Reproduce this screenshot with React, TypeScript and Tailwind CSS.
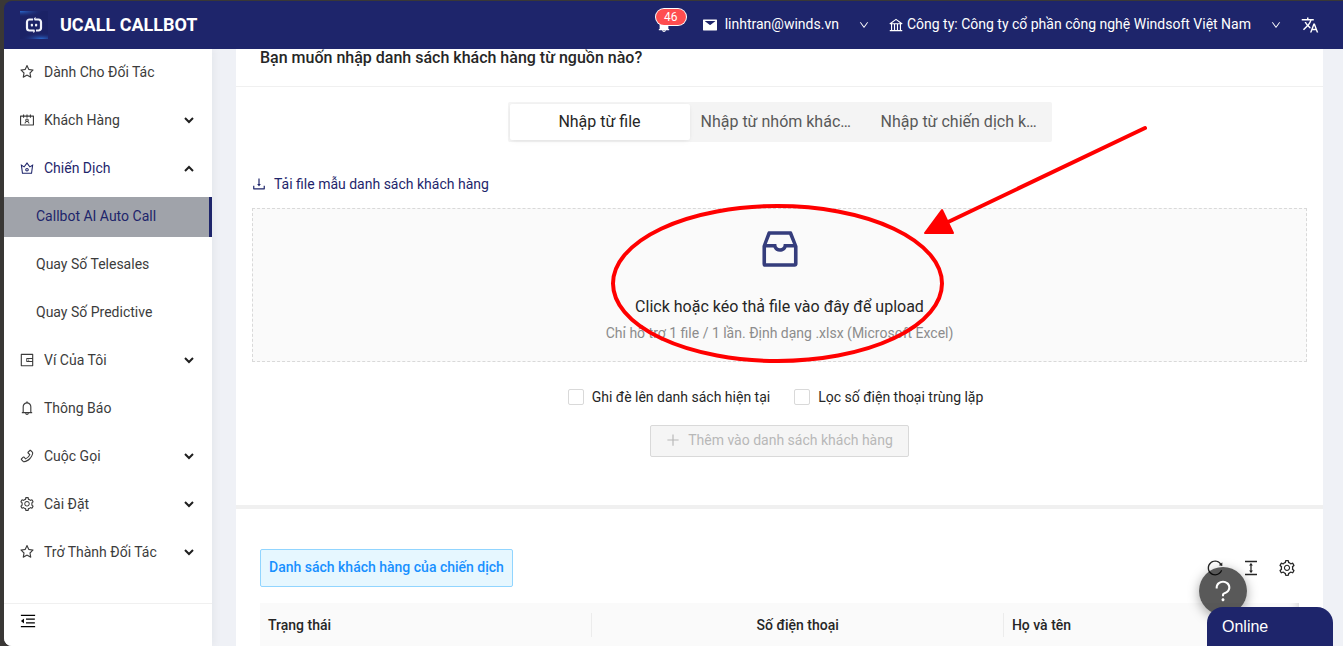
import React, { useState } from "react";
import type { IconType } from "react-icons";
import {
  AiFillBell,
  AiFillMail,
  AiOutlineBank,
  AiOutlineBell,
  AiOutlineColumnHeight,
  AiOutlineContacts,
  AiOutlineCrown,
  AiOutlineDown,
  AiOutlineDownload,
  AiOutlineInbox,
  AiOutlineMenuFold,
  AiOutlinePhone,
  AiOutlinePlus,
  AiOutlineQuestion,
  AiOutlineReload,
  AiOutlineSetting,
  AiOutlineStar,
  AiOutlineWallet,
} from "react-icons/ai";
import { MdTranslate } from "react-icons/md";

type MenuItem = {
  label: string;
  icon: IconType;
  arrow?: "up" | "down";
  active?: boolean;
  children?: { label: string; selected?: boolean }[];
};

const MENU: MenuItem[] = [
  { label: "Dành Cho Đối Tác", icon: AiOutlineStar },
  { label: "Khách Hàng", icon: AiOutlineContacts, arrow: "down" },
  {
    label: "Chiến Dịch",
    icon: AiOutlineCrown,
    arrow: "up",
    active: true,
    children: [
      { label: "Callbot AI Auto Call", selected: true },
      { label: "Quay Số Telesales" },
      { label: "Quay Số Predictive" },
    ],
  },
  { label: "Ví Của Tôi", icon: AiOutlineWallet, arrow: "down" },
  { label: "Thông Báo", icon: AiOutlineBell },
  { label: "Cuộc Gọi", icon: AiOutlinePhone, arrow: "down" },
  { label: "Cài Đặt", icon: AiOutlineSetting, arrow: "down" },
  { label: "Trở Thành Đối Tác", icon: AiOutlineStar, arrow: "down" },
];

const TABS = ["Nhập từ file", "Nhập từ nhóm khách hàng", "Nhập từ chiến dịch khác"];

// Ant glyphs carry a 64-unit margin; this trims it so they fill their box.
function Icon({ as: Glyph, className }: { as: IconType; className: string }) {
  return <Glyph viewBox="64 64 896 896" className={className} />;
}

function Logo() {
  return (
    <svg viewBox="0 0 28 28" className="size-7" aria-hidden="true">
      <defs>
        <radialGradient id="glow-top" cx="0" cy="0" r="1" gradientTransform="scale(0.9 0.22)">
          <stop offset="0" stopColor="#2a6ad0" />
          <stop offset="1" stopColor="#1b2266" stopOpacity="0" />
        </radialGradient>
        <radialGradient id="glow-base" cx="0" cy="0" r="1" gradientTransform="translate(0.75 1) scale(0.75 0.22)">
          <stop offset="0" stopColor="#2a6ad0" />
          <stop offset="1" stopColor="#1b2266" stopOpacity="0" />
        </radialGradient>
      </defs>
      <rect width="28" height="28" fill="#1b2266" />
      <rect width="28" height="28" fill="url(#glow-top)" />
      <rect width="28" height="28" fill="url(#glow-base)" />
      <g fill="none" stroke="#f1f2fa" strokeWidth="2.200">
        <path d="M13 8.500H9.500a2.500 2.500 0 0 0-2.500 2.500v6a2.500 2.500 0 0 0 2.500 2.500H12.500L14.500 19.500" />
        <path d="M14.500 8.500h4a2.500 2.500 0 0 1 2.500 2.500v6a2.500 2.500 0 0 1-2.500 2.500H16" />
        <path d="M14 8.500l1.500-2M14.500 19.500l-1 2" strokeWidth="1.200" />
      </g>
      <rect x="10.800" y="12.700" width="2.200" height="2.800" rx="0.800" fill="#f1f2fa" />
      <rect x="15" y="12.700" width="2.200" height="2.800" rx="0.800" fill="#f1f2fa" />
    </svg>
  );
}

function Chevron({ up }: { up?: boolean }) {
  return (
    <svg viewBox="0 0 10 10" className="size-[10px]" aria-hidden="true">
      <path
        d={up ? "M1 8 5 4 9 8" : "M1 3 5 7 9 3"}
        fill="none"
        stroke="#1f1f1f"
        strokeWidth="2"
      />
    </svg>
  );
}

function Header() {
  return (
    <header className="z-10 flex h-12 shrink-0 items-center justify-between rounded-tl-lg bg-[#1e256b] pr-6 pl-4 text-white">
      <a href="#home" className="flex items-center gap-3">
        <Logo />
        <h1 className="text-lg font-bold">UCALL CALLBOT</h1>
      </a>
      <div className="flex items-center text-sm">
        <button aria-label="Thông báo" className="relative mr-8">
          <Icon as={AiFillBell} className="size-[14px]" />
          <span className="absolute -top-[9px] -left-[1px] h-4 w-[30px] rounded-full bg-[#ff4d4f] text-center text-xs leading-4 ring-1 ring-white">
            46
          </span>
        </button>
        <button className="mr-5 flex items-center">
          <Icon as={AiFillMail} className="mr-2 size-[14px]" />
          <span className="pb-[2px]">linhtran@winds.vn</span>
          <Icon as={AiOutlineDown} className="ml-5 size-[10px]" />
        </button>
        <button className="mr-5 flex items-center">
          <Icon as={AiOutlineBank} className="mr-1 size-[14px]" />
          <span className="pb-[2px]">Công ty: Công ty cổ phần công nghệ Windsoft Việt Nam</span>
          <Icon as={AiOutlineDown} className="ml-5 size-[10px]" />
        </button>
        <button aria-label="Ngôn ngữ">
          <MdTranslate className="size-[18px]" />
        </button>
      </div>
    </header>
  );
}

function Sidebar() {
  return (
    <aside className="z-[5] flex w-52 shrink-0 flex-col rounded-bl-lg bg-white text-sm text-[#3c3c3c] shadow-[2px_0_8px_rgba(29,35,41,0.05)]">
      <nav className="grow pt-1">
        {MENU.map((item) => (
          <div key={item.label}>
            <button
              className={
                item.active
                  ? "mb-2 flex h-10 w-full items-center pr-[18px] pb-[2px] pl-4 text-[#1e256b]"
                  : "mb-2 flex h-10 w-full items-center pr-[18px] pb-[2px] pl-4"
              }
            >
              <Icon as={item.icon} className="mr-[10px] size-[14px]" />
              <span className="grow text-left">{item.label}</span>
              {item.arrow && <Chevron up={item.arrow === "up"} />}
            </button>
            {item.children?.map((child) => (
              <a
                key={child.label}
                href="#campaign"
                className={
                  child.selected
                    ? "mb-2 flex h-10 items-center border-r-3 border-[#1e256b] bg-[#a0a3aa] pb-[2px] pl-8 text-[#1e256b]"
                    : "mb-2 flex h-10 items-center pb-[2px] pl-8"
                }
              >
                {child.label}
              </a>
            ))}
          </div>
        ))}
      </nav>
      <div className="h-[43px] border-t border-[#f0f0f0] px-4 pt-[9px]">
        <button aria-label="Thu gọn">
          <Icon as={AiOutlineMenuFold} className="size-4 text-black" />
        </button>
      </div>
    </aside>
  );
}

function ImportPanel() {
  const [tab, setTab] = useState(0);
  return (
    <section className="bg-white pb-12 text-[#262626]">
      <h2 className="border-b border-[#f0f0f0] px-6 pb-[19px] text-base leading-[18px] font-medium">
        Bạn muốn nhập danh sách khách hàng từ nguồn nào?
      </h2>
      <div className="flex justify-center pt-[15px]">
        <div className="flex rounded-xs bg-[#f4f4f4] p-[2px]">
          {TABS.map((label, index) => (
            <button
              key={label}
              onClick={() => setTab(index)}
              className={
                index === tab
                  ? "h-9 w-[180px] truncate rounded-xs bg-white px-[11px] text-base text-[#262626] shadow-[0_2px_8px_-2px_rgba(0,0,0,0.05),0_1px_4px_-1px_rgba(0,0,0,0.07)]"
                  : "h-9 w-[180px] truncate px-[11px] text-base text-[#595959]"
              }
            >
              {label}
            </button>
          ))}
        </div>
      </div>
      <div className="px-4 pt-8">
        <a href="#template" className="flex h-5 items-center text-sm text-[#1e256b]">
          <Icon as={AiOutlineDownload} className="mr-2 size-[14px]" />
          Tải file mẫu danh sách khách hàng
        </a>
        <label className="mt-[14px] flex h-[154px] cursor-pointer flex-col items-center border border-dashed border-[#d9d9d9] bg-[#fafafa] pt-4">
          <input type="file" accept=".xlsx" className="sr-only" />
          <AiOutlineInbox className="size-12 text-[#353d7c]" />
          <span className="mt-[22px] text-base leading-6">Click hoặc kéo thả file vào đây để upload</span>
          <span className="mt-[3px] text-sm leading-[22px] text-[#8c8c8c]">
            Chỉ hỗ trợ 1 file / 1 lần. Định dạng .xlsx (Microsoft Excel)
          </span>
        </label>
      </div>
      <div className="mt-6 flex justify-center gap-4 text-sm leading-[22px]">
        {["Ghi đè lên danh sách hiện tại", "Lọc số điện thoại trùng lặp"].map((label) => (
          <label key={label} className="flex items-center gap-2 pr-2">
            <input
              type="checkbox"
              className="size-4 appearance-none rounded-xs border border-[#d9d9d9] bg-white checked:bg-[#1e256b]"
            />
            {label}
          </label>
        ))}
      </div>
      <div className="mt-[17px] flex justify-center">
        <button
          disabled
          className="flex h-8 items-center rounded-xs border border-[#d9d9d9] bg-[#f5f5f5] px-[15px] pb-[2px] text-sm text-[#b8b8b8]"
        >
          <Icon as={AiOutlinePlus} className="mr-2 size-[14px]" />
          Thêm vào danh sách khách hàng
        </button>
      </div>
    </section>
  );
}

function CustomerTable() {
  return (
    <section className="mt-1 grow bg-white px-6 pt-10 text-sm text-[#262626]">
      <div className="flex items-center justify-between pr-1">
        <h3 className="flex h-[38px] items-center rounded-xs border border-[#91d5ff] bg-[#e6f7ff] px-2 pb-[2px] font-medium text-[#1890ff]">
          Danh sách khách hàng của chiến dịch
        </h3>
        <div className="flex gap-5 text-[#262626]">
          <button aria-label="Tải lại">
            <Icon as={AiOutlineReload} className="size-4" />
          </button>
          <button aria-label="Mật độ">
            <Icon as={AiOutlineColumnHeight} className="size-4" />
          </button>
          <button aria-label="Cài đặt">
            <Icon as={AiOutlineSetting} className="size-4" />
          </button>
        </div>
      </div>
      <table className="mt-4 w-full table-fixed bg-[#fafafa] shadow-[inset_-10px_0_8px_-8px_rgba(0,0,0,0.15)]">
        <thead>
          <tr className="h-11">
            <th className="w-[32%] p-0 text-left font-medium">
              <div className="border-r border-[#ececec] px-2 leading-6">Trạng thái</div>
            </th>
            <th className="w-[39.600%] p-0 text-center font-medium">
              <div className="border-r border-[#ececec] px-2 leading-6">Số điện thoại</div>
            </th>
            <th className="p-0 text-left font-medium">
              <div className="px-2 leading-6">Họ và tên</div>
            </th>
          </tr>
        </thead>
      </table>
    </section>
  );
}

function Annotation() {
  return (
    <svg
      viewBox="0 0 540 242"
      className="pointer-events-none absolute top-[124px] left-[610px] z-20 h-[242px] w-[540px]"
      aria-hidden="true"
    >
      <ellipse cx="167.500" cy="159.500" rx="164.500" ry="77.500" fill="none" stroke="#ff0000" strokeWidth="4" />
      <path d="M535 4 336 99" fill="none" stroke="#ff0000" strokeWidth="4" strokeLinecap="round" />
      <path d="M315 109 332 86 343 109Z" fill="#ff0000" stroke="#ff0000" strokeWidth="2" strokeLinejoin="round" />
    </svg>
  );
}

export default function App() {
  return (
    <div className="relative flex h-screen flex-col overflow-hidden bg-[#3a3836] pt-px pl-1 font-[Roboto,sans-serif]">
      <Header />
      <div className="flex min-h-0 grow">
        <div className="flex min-h-0 grow rounded-bl-lg bg-[#eff1f6]">
          <Sidebar />
          <main className="flex min-w-0 grow flex-col overflow-hidden bg-[#eff1f6] pr-5 pl-6">
            <div className="flex grow flex-col bg-[#f0f0f0]">
              <ImportPanel />
              <CustomerTable />
            </div>
          </main>
        </div>
      </div>
      <Annotation />
      <button
        aria-label="Trợ giúp"
        className="absolute right-24 bottom-[31px] z-20 flex size-12 items-center justify-center rounded-full bg-black/65 text-white shadow-[0_3px_12px_rgba(0,0,0,0.35)]"
      >
        <Icon as={AiOutlineQuestion} className="size-6" />
      </button>
      <button className="absolute right-[10px] bottom-0 z-30 h-[39px] w-[126px] rounded-t-2xl bg-[#1e256b] px-[15px] text-left font-['Liberation_Sans',sans-serif] text-base text-white">
        Online
      </button>
    </div>
  );
}
